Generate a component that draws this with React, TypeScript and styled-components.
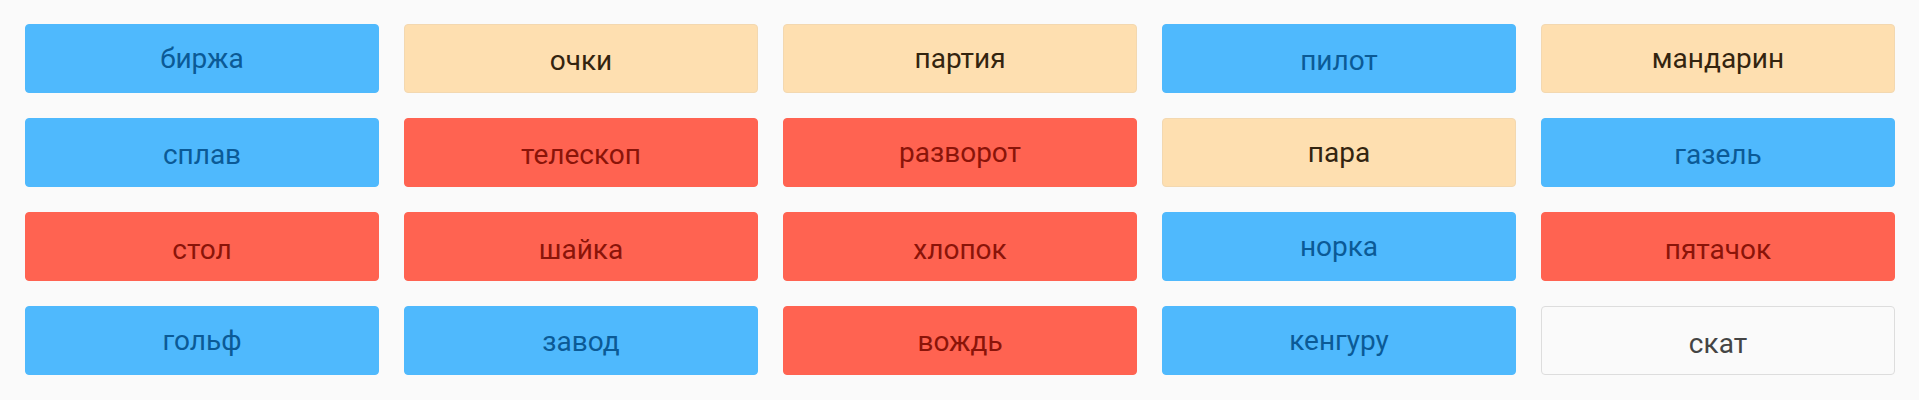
import React from "react";
import styled, { createGlobalStyle } from "styled-components";

const Global = createGlobalStyle`
  html, body { margin: 0; padding: 0; background: #fafafa; }
  body { font-family: Roboto, "Noto Sans", sans-serif; }
`;

type Kind = "blue" | "peach" | "red" | "plain";

const palette: Record<Kind, { bg: string; fg: string; border: string }> = {
  blue: { bg: "#4fb9fd", fg: "#0b5a96", border: "#4fb9fd" },
  peach: { bg: "#fedfb0", fg: "#33240f", border: "#f3d8b0" },
  red: { bg: "#ff6351", fg: "#8a1409", border: "#ff6351" },
  plain: { bg: "#fafafa", fg: "#444444", border: "#dddddd" },
};

const Board = styled.div`
  display: grid;
  grid-template-columns: repeat(5, 1fr);
  grid-auto-rows: 69px;
  column-gap: 25px;
  row-gap: 25px;
  padding: 24px 24px 25px 25px;
  box-sizing: border-box;
  width: 1919px;
  height: 400px;
`;

const Card = styled.div<{ $kind: Kind; $dy: number }>`
  display: flex;
  align-items: center;
  justify-content: center;
  box-sizing: border-box;
  padding-top: ${(p) => p.$dy * 2}px;
  border-radius: 4px;
  border: 1px solid ${(p) => palette[p.$kind].border};
  background: ${(p) => palette[p.$kind].bg};
  color: ${(p) => palette[p.$kind].fg};
  font-family: Roboto, "Noto Sans", sans-serif;
  font-size: 28px;
  line-height: 1;
`;

const words: [string, Kind, number][] = [
  ["биржа", "blue", 0],
  ["очки", "peach", 2.5],
  ["партия", "peach", 0],
  ["пилот", "blue", 2.5],
  ["мандарин", "peach", 0],
  ["сплав", "blue", 2.5],
  ["телескоп", "red", 2.5],
  ["разворот", "red", 0],
  ["пара", "peach", 0],
  ["газель", "blue", 2.5],
  ["стол", "red", 3],
  ["шайка", "red", 3],
  ["хлопок", "red", 3],
  ["норка", "blue", 0],
  ["пятачок", "red", 3],
  ["гольф", "blue", 0],
  ["завод", "blue", 1],
  ["вождь", "red", 1],
  ["кенгуру", "blue", 0],
  ["скат", "plain", 3],
];

export default function App() {
  return (
    <>
      <Global />
      <Board>
        {words.map(([w, k, dy]) => (
          <Card key={w} $kind={k} $dy={dy}>
            {w}
          </Card>
        ))}
      </Board>
    </>
  );
}
